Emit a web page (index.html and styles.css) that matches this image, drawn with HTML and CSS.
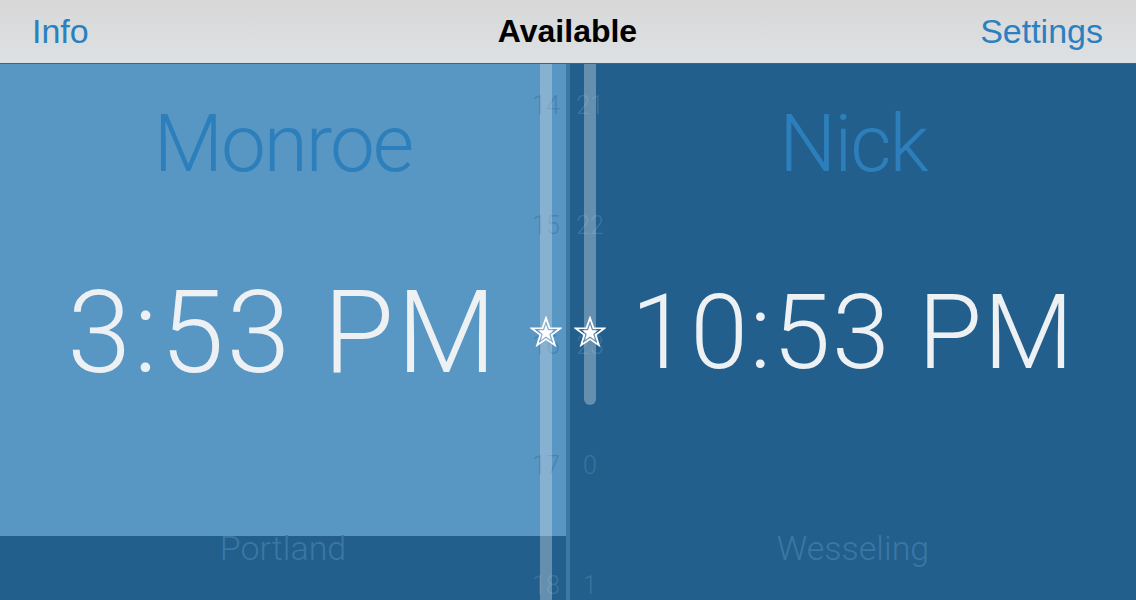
FILE: index.html
```html
<!DOCTYPE html>
<html lang="en">
<head>
<meta charset="utf-8">
<title>Available</title>
<link rel="stylesheet" href="styles.css">
</head>
<body>
<header class="navbar">
  <a class="nav-link nav-left">Info</a>
  <h1 class="nav-title">Available</h1>
  <a class="nav-link nav-right">Settings</a>
</header>
<main class="stage">
  <section class="panel">
    <div class="card card-light">
      <div class="name">Monroe</div>
      <div class="time">3:53 PM</div>
    </div>
    <div class="city">Portland</div>
  </section>
  <div class="divider"></div>
  <section class="panel">
    <div class="card">
      <div class="name">Nick</div>
      <div class="time time-remote">10:53 PM</div>
    </div>
    <div class="city">Wesseling</div>
  </section>

  <div class="ticks ticks-left"><span>14</span><span>15</span><span>16</span><span>17</span><span>18</span></div>
  <div class="ticks ticks-right"><span>21</span><span>22</span><span>23</span><span>0</span><span>1</span></div>
  <div class="track track-left"></div>
  <div class="track track-right"></div>

  <svg class="star star-left" viewBox="0 0 32 32" width="32" height="32" aria-hidden="true">
    <polygon points="16,2 19.53,12.15 30.27,12.36 21.71,18.85 24.82,29.14 16,23 7.18,29.14 10.29,18.85 1.73,12.36 12.47,12.15" fill="none" stroke="#ffffff" stroke-width="1.8" stroke-linejoin="miter"/>
    <polygon points="16,8.5 18,14.25 24.08,14.37 19.23,18.05 21,23.88 16,20.4 11,23.88 12.77,18.05 7.92,14.37 14,14.25" fill="#ffffff"/>
  </svg>
  <svg class="star star-right" viewBox="0 0 32 32" width="32" height="32" aria-hidden="true">
    <polygon points="16,2 19.53,12.15 30.27,12.36 21.71,18.85 24.82,29.14 16,23 7.18,29.14 10.29,18.85 1.73,12.36 12.47,12.15" fill="none" stroke="#ffffff" stroke-width="1.8" stroke-linejoin="miter"/>
    <polygon points="16,8.5 18,14.25 24.08,14.37 19.23,18.05 21,23.88 16,20.4 11,23.88 12.77,18.05 7.92,14.37 14,14.25" fill="#ffffff"/>
  </svg>
</main>
</body>
</html>
```

FILE: styles.css
```css
* { box-sizing: border-box; }

html, body {
  margin: 0;
  padding: 0;
}

body {
  width: 1136px;
  height: 600px;
  overflow: hidden;
  background: #225f8d;
  font-family: Roboto, "Liberation Sans", sans-serif;
}

.navbar {
  height: 64px;
  display: grid;
  grid-template-columns: 1fr auto 1fr;
  align-items: center;
  padding: 0 33px 0 32px;
  background: linear-gradient(#d8d8d8, #dde0e3);
  border-bottom: 1px solid #3d6385;
}

.nav-link {
  font-family: "Liberation Sans", Arial, sans-serif;
  font-size: 34px;
  color: #2b80c0;
  text-decoration: none;
}

.nav-right { justify-self: end; }

.nav-title {
  margin: 0;
  font-family: "Liberation Sans", Arial, sans-serif;
  font-size: 32px;
  font-weight: 700;
  color: #000000;
}

.stage {
  position: relative;
  height: 536px;
  display: grid;
  grid-template-columns: 566px 4px 566px;
  overflow: hidden;
  background: #225f8d;
}

.panel {
  display: flex;
  flex-direction: column;
  align-items: stretch;
}

.card {
  height: 472px;
  padding-top: 40px;
  display: flex;
  flex-direction: column;
  align-items: center;
}

.card-light { background: #5896c3; }

.name {
  font-size: 80px;
  line-height: 80px;
  font-weight: 300;
  letter-spacing: -2px;
  color: #2d7fbc;
  white-space: nowrap;
}

.time {
  margin-top: 91px;
  height: 115px;
  font-size: 115px;
  line-height: 115px;
  font-weight: 300;
  letter-spacing: 2.5px;
  color: #eef1f4;
  white-space: nowrap;
}

.time-remote {
  font-size: 104px;
  letter-spacing: 1.5px;
}

.city {
  text-align: center;
  font-size: 34px;
  line-height: 24px;
  font-weight: 300;
  color: #3b77a4;
  white-space: nowrap;
}

.divider { background: #3d79a2; }

.ticks {
  position: absolute;
  top: 32px;
  width: 40px;
  display: flex;
  flex-direction: column;
  gap: 100px;
  text-align: center;
  font-size: 25px;
  line-height: 20px;
  font-weight: 300;
  color: rgba(69, 123, 163, 0.74);
}

.ticks-left { left: 526px; }
.ticks-right { left: 570px; }

.track {
  position: absolute;
  top: 0;
  width: 12px;
  background: rgba(214, 224, 234, 0.37);
}

.track-left {
  left: 540px;
  bottom: 0;
}

.track-right {
  left: 584px;
  height: 341px;
  border-radius: 0 0 6px 6px;
}

.star {
  position: absolute;
  top: 252px;
}

.star-left { left: 530px; }
.star-right { left: 574px; }
```
